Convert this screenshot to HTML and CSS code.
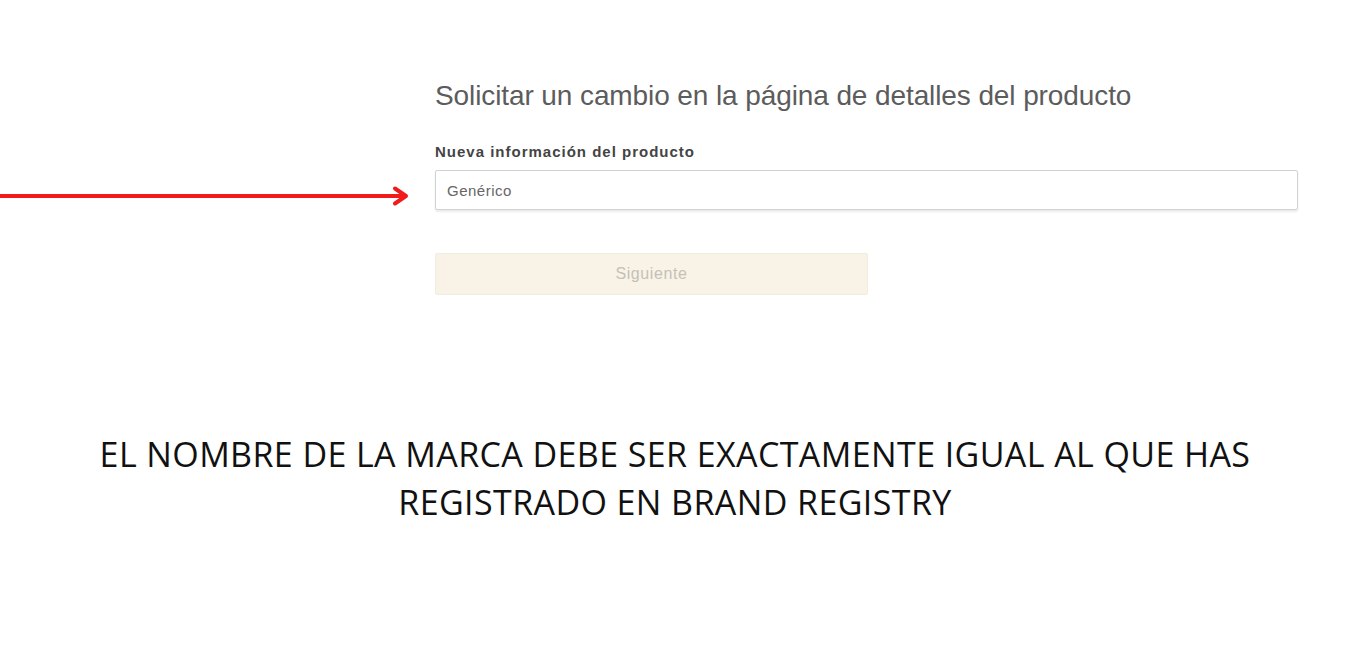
FILE: index.html
```html
<!DOCTYPE html>
<html lang="es">
<head>
    <meta charset="UTF-8">
    <title>Solicitar un cambio</title>
    <link rel="stylesheet" href="styles.css">
</head>
<body>
<div class="shot">
    <div class="spacer"></div>
    <h2 class="title">Solicitar un cambio en la página de detalles del producto</h2>

    <div class="spacer"></div>
    <label class="label" for="brand">Nueva información del producto</label>

    <div class="arrow">
        <svg width="412" height="40" viewBox="0 0 412 40">
            <line x1="0" y1="26" x2="404" y2="26" stroke="#f21b1b" stroke-width="4"/>
            <polyline points="395,18.5 406,26 395,33.5" fill="none" stroke="#f21b1b" stroke-width="4" stroke-linecap="round" stroke-linejoin="round"/>
        </svg>
    </div>
    <input class="field" type="text" id="brand" value="Genérico">

    <div class="spacer"></div>
    <div class="actions">
        <button class="next" type="button">Siguiente</button>
    </div>
</div>

<p class="note">EL NOMBRE DE LA MARCA DEBE SER EXACTAMENTE IGUAL AL QUE HAS<br>REGISTRADO EN BRAND REGISTRY</p>
</body>
</html>
```

FILE: styles.css
```css
body {
    margin: 0;
    background: #fff;
    font-family: "Liberation Sans", Arial, sans-serif;
}
.shot {
    display: grid;
    grid-template-columns: 435px 863px;
    align-items: center;
    padding-top: 81px;
}
.title {
    margin: 0 0 33px;
    font-size: 28px;
    font-weight: normal;
    letter-spacing: -0.1px;
    color: #5c5c5c;
    line-height: 30px;
}
.label {
    font-size: 15px;
    font-weight: bold;
    letter-spacing: 1px;
    color: #444;
    line-height: 16px;
    margin-bottom: 10px;
}
.arrow {
    height: 40px;
}
.arrow svg {
    display: block;
}
.field {
    box-sizing: border-box;
    width: 863px;
    height: 40px;
    padding: 0 11px;
    border: 1px solid #d2d2d2;
    border-radius: 2px;
    box-shadow: 0 2px 2px rgba(0, 0, 0, 0.08);
    font-family: "Liberation Sans", Arial, sans-serif;
    font-size: 15px;
    letter-spacing: 0.5px;
    color: #666;
    outline: none;
}
.actions {
    padding-top: 43px;
}
.next {
    width: 433px;
    height: 42px;
    border: 1px solid #f1ece0;
    border-radius: 2px;
    background: #f8f3e6;
    color: #c5c0b6;
    font-family: "Liberation Sans", Arial, sans-serif;
    font-size: 16px;
    letter-spacing: 0.6px;
}
.note {
    margin: 135px 0 0;
    text-align: center;
    font-family: "Open Sans", sans-serif;
    font-size: 34px;
    letter-spacing: 0.4px;
    line-height: 48px;
    color: #111;
}
```
